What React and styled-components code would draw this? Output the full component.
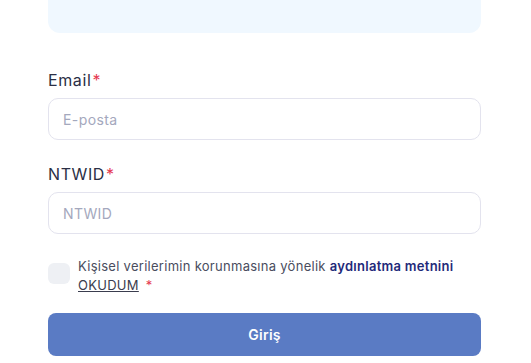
import React, { useState } from "react";
import styled, { createGlobalStyle } from "styled-components";

const GlobalStyle = createGlobalStyle`
  html, body {
    margin: 0;
    padding: 0;
    background: #ffffff;
    font-family: Inter, "Noto Sans", sans-serif;
  }
  * {
    box-sizing: border-box;
  }
`;

const Page = styled.div`
  width: 531px;
  height: 363px;
  overflow: hidden;
  padding: 0 50px 0 48px;
  display: flex;
  flex-direction: column;
`;

const InfoBox = styled.div`
  height: 46px;
  margin-top: -13px;
  border-radius: 12px;
  background: #f0f8ff;
`;

const Field = styled.div`
  display: flex;
  flex-direction: column;
  margin-top: ${(p) => p.$top}px;
`;

const Label = styled.label`
  font-size: 16px;
  line-height: 20px;
  color: #2b2f45;
  font-weight: 400;
  letter-spacing: 0.6px;
  margin-bottom: 8px;
`;

const Star = styled.span`
  color: #e53950;
  margin-left: ${(p) => (p.$size ? 3 : 1)}px;
  font-size: ${(p) => p.$size || 16}px;
`;

const InputBox = styled.input`
  width: 100%;
  height: 42px;
  padding: 0 14px;
  border: 1px solid #e3e3ee;
  border-radius: 10px;
  font-family: inherit;
  font-size: 14px;
  letter-spacing: 0.4px;
  color: #2b2f45;
  outline: none;
  background: #ffffff;
  &::placeholder {
    color: #a4a8bd;
  }
`;

const ConsentRow = styled.div`
  display: flex;
  align-items: flex-start;
  gap: 8px;
  margin-top: 23px;
`;

const CheckBox = styled.button`
  flex: none;
  width: 22px;
  height: 21px;
  margin-top: 6px;
  border: none;
  border-radius: 6px;
  background: ${(p) => (p.$checked ? "#5a7bc4" : "#eef0f4")};
  cursor: pointer;
  padding: 0;
`;

const ConsentText = styled.p`
  margin: 0;
  font-size: 13px;
  line-height: 19px;
  letter-spacing: 0.28px;
  color: #4a4d5e;
`;

const Link = styled.a`
  color: #1f2a7a;
  font-weight: 600;
  text-decoration: none;
`;

const Underline = styled.span`
  text-decoration: underline;
  color: #3a3d4e;
`;

const SubmitButton = styled.button`
  width: 100%;
  height: 43px;
  margin-top: 18px;
  border: none;
  border-radius: 8px;
  background: #5a7bc4;
  color: #ffffff;
  font-family: inherit;
  font-size: 14px;
  font-weight: 600;
  letter-spacing: 0.3px;
  cursor: pointer;
`;

const App = () => {
  const [input, setInput] = useState({ email: "", ntwid: "" });
  const [checked, setChecked] = useState(false);

  const onChangeHandlerInput = (e) => {
    const { name, value } = e.target;
    setInput({ ...input, [name]: value });
  };

  return (
    <Page>
      <GlobalStyle />
      <InfoBox />
      <Field $top={37}>
        <Label>
          Email<Star>*</Star>
        </Label>
        <InputBox
          type="text"
          name="email"
          value={input.email}
          onChange={onChangeHandlerInput}
          placeholder="E-posta"
        />
      </Field>
      <Field $top={24}>
        <Label>
          NTWID<Star>*</Star>
        </Label>
        <InputBox
          type="text"
          name="ntwid"
          value={input.ntwid}
          onChange={onChangeHandlerInput}
          placeholder="NTWID"
        />
      </Field>
      <ConsentRow>
        <CheckBox $checked={checked} onClick={() => setChecked(!checked)} />
        <ConsentText>
          Kişisel verilerimin korunmasına yönelik{" "}
          <Link href="#">aydınlatma metnini</Link>
          <br />
          <Underline>OKUDUM</Underline> <Star $size={13}>*</Star>
        </ConsentText>
      </ConsentRow>
      <SubmitButton>Giriş</SubmitButton>
    </Page>
  );
};

export default App;
